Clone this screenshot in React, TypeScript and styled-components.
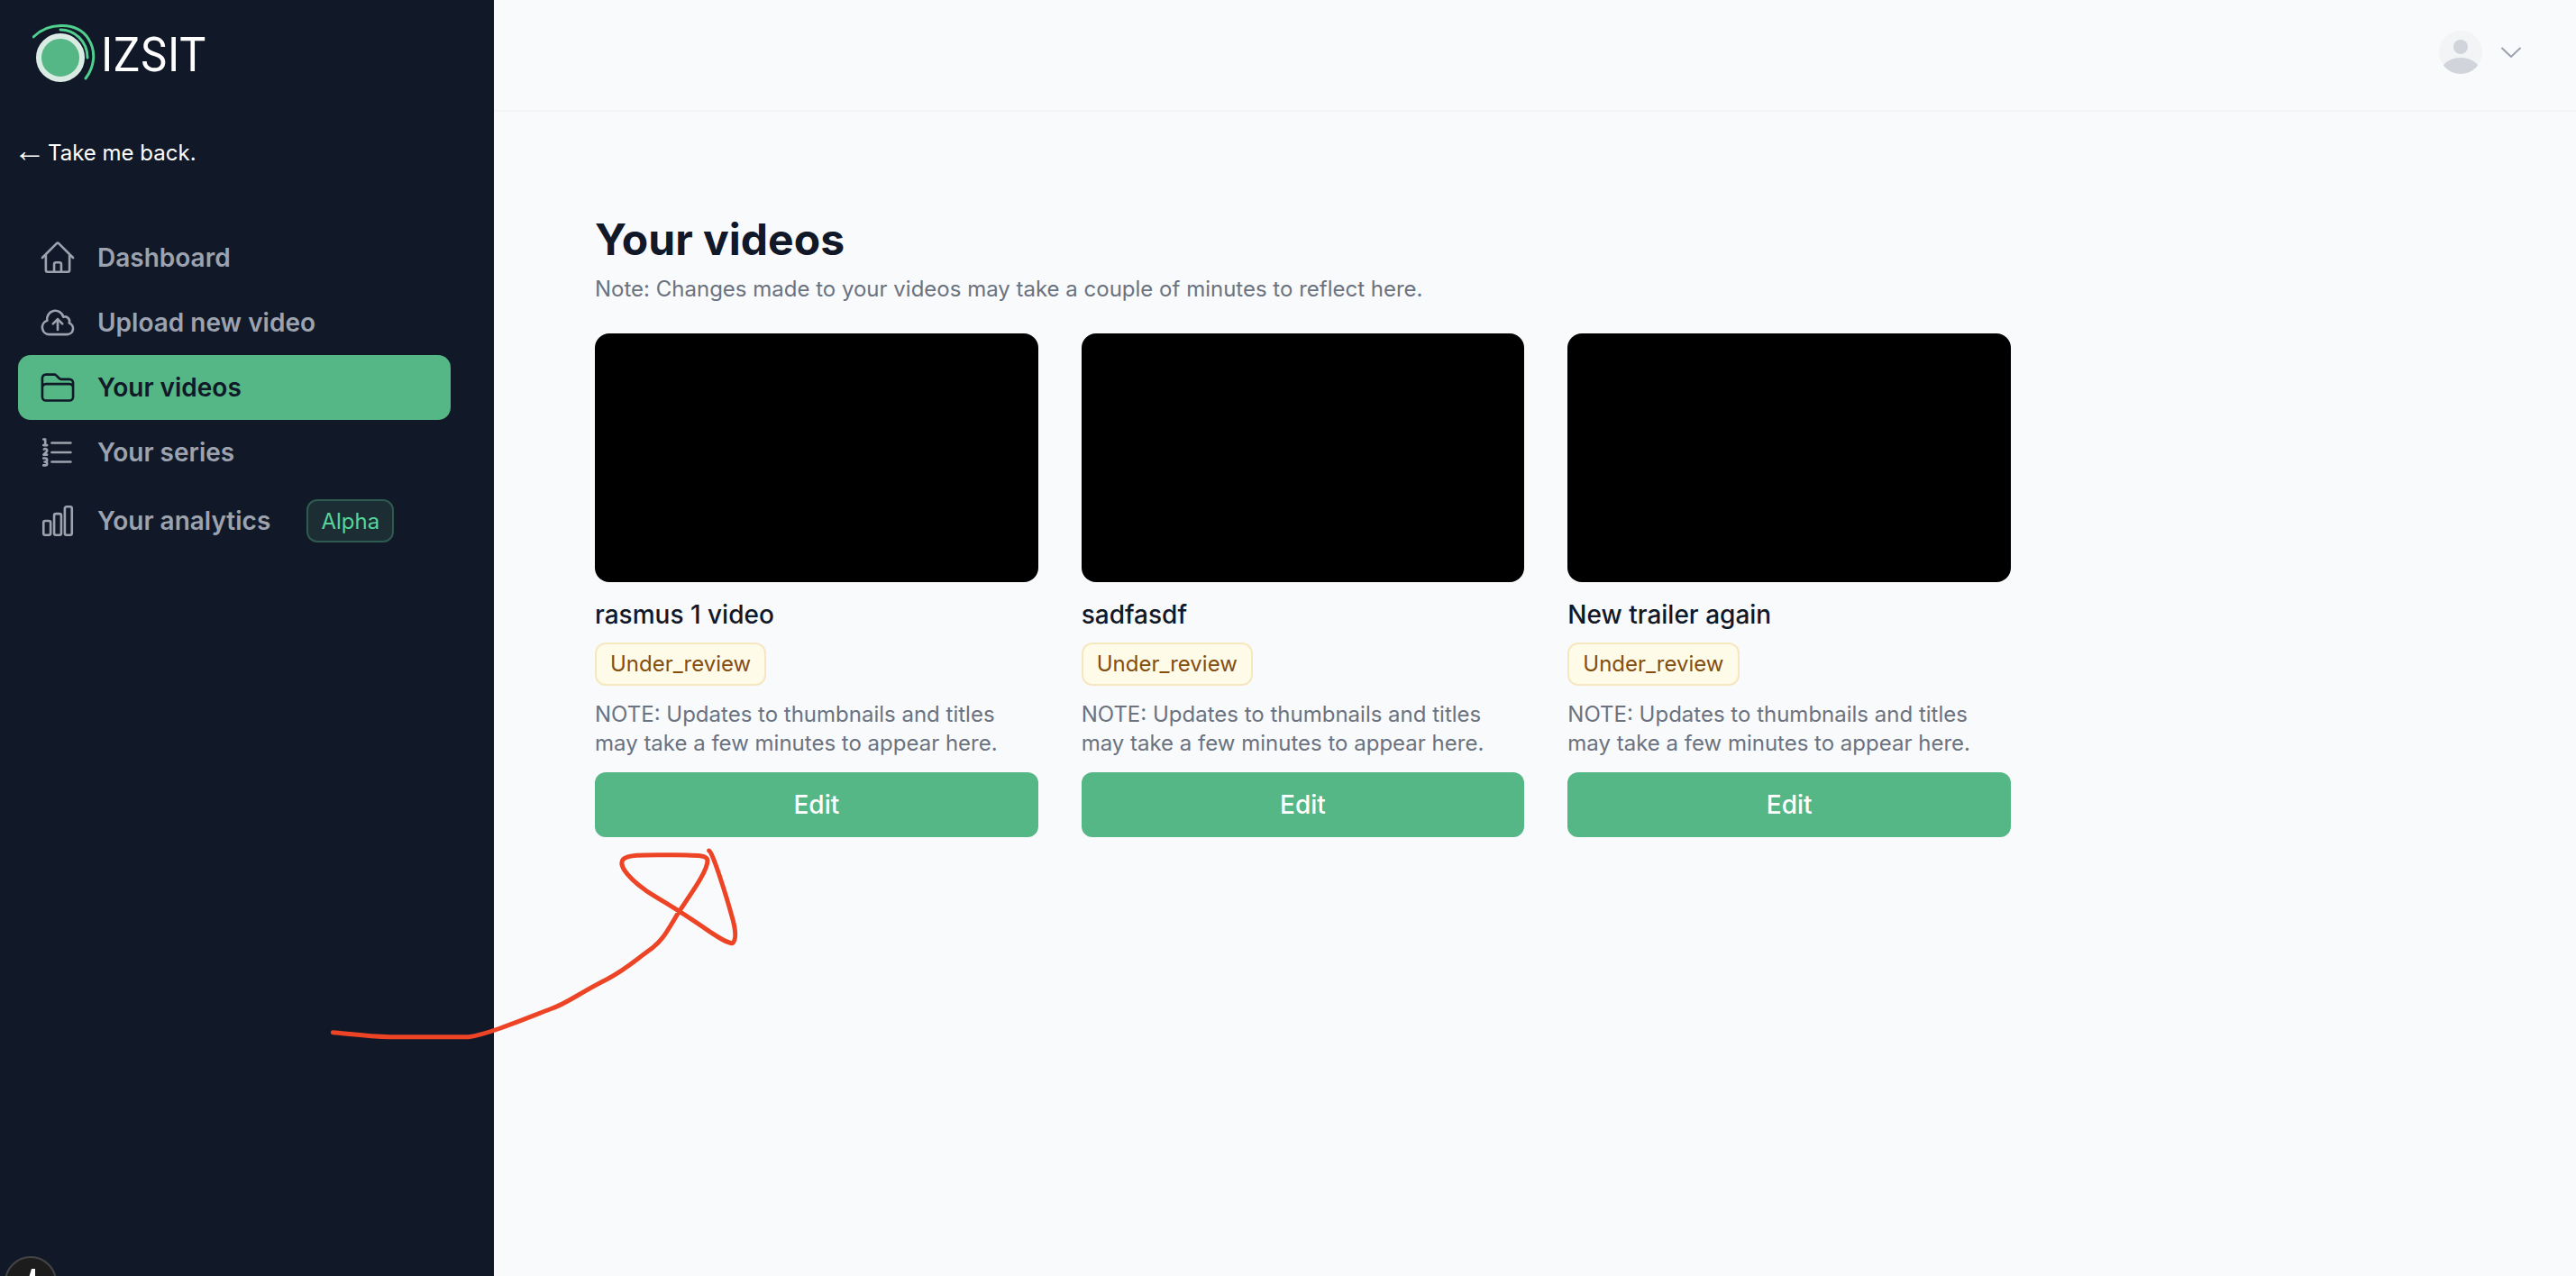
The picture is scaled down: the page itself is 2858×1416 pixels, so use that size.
import { FC, ReactNode } from "react";
import styled, { createGlobalStyle } from "styled-components";
import {
  HiOutlineHome,
  HiOutlineCloudArrowUp,
  HiOutlineFolder,
  HiOutlineNumberedList,
  HiOutlineChartBar,
} from "react-icons/hi2";

const GlobalStyle = createGlobalStyle`
  html, body {
    margin: 0;
    padding: 0;
    height: 100%;
    overflow: hidden;
    background-color: #f9fafb;
    font-family: Inter, "Noto Sans", sans-serif;
  }
  * {
    box-sizing: border-box;
  }
`;

const Page = styled.div`
  position: relative;
  display: flex;
  width: 100%;
  height: 100vh;
  overflow: hidden;
`;

const Sidebar = styled.aside`
  display: flex;
  flex-direction: column;
  width: 548px;
  flex-shrink: 0;
  background-color: #111827;
`;

const LogoRow = styled.div`
  display: flex;
  align-items: center;
  height: 122px;
  padding-left: 36px;
  gap: 6px;
`;

const LogoText = styled.span`
  display: inline-block;
  font-family: Roboto, sans-serif;
  font-size: 54px;
  font-weight: 400;
  letter-spacing: 1px;
  line-height: 1;
  color: #ffffff;
  transform: scaleX(0.9);
  transform-origin: left center;
`;

const BackLink = styled.a`
  display: block;
  height: 36px;
  margin-top: 30px;
  padding-left: 15px;
  font-size: 24px;
  line-height: 36px;
  color: #ffffff;
`;

const BackArrow = styled.span`
  font-family: "Liberation Sans", sans-serif;
  font-size: 36px;
  line-height: 0;
  vertical-align: -1px;
  margin-right: 2px;
`;

const Nav = styled.nav`
  display: flex;
  flex-direction: column;
  width: 480px;
  margin-top: 62px;
  margin-left: 20px;
`;

const NavItem = styled.a<{ $active?: boolean; $tall?: boolean }>`
  display: flex;
  align-items: center;
  height: ${(p) => (p.$tall ? "80px" : "72px")};
  padding-left: 23px;
  gap: 23px;
  border-radius: 14px;
  font-size: 28px;
  font-weight: 600;
  color: ${(p) => (p.$active ? "#111827" : "#9ca3af")};
  background-color: ${(p) => (p.$active ? "#55b686" : "transparent")};
  svg {
    flex-shrink: 0;
    font-size: 42px;
  }
`;

const AlphaBadge = styled.span`
  display: inline-flex;
  align-items: center;
  justify-content: center;
  width: 97px;
  height: 48px;
  margin-left: 17px;
  border: 2px solid #2f5a50;
  border-radius: 12px;
  background-color: #1c2e33;
  font-size: 24px;
  font-weight: 400;
  color: #55d69c;
`;

const Main = styled.main`
  display: flex;
  flex-direction: column;
  flex-grow: 1;
`;

const TopBar = styled.header`
  display: flex;
  align-items: center;
  justify-content: flex-end;
  height: 124px;
  padding-right: 61px;
  padding-bottom: 6px;
  gap: 21px;
  border-bottom: 2px solid #f3f4f6;
`;

const Content = styled.section`
  padding: 112px 0 0 112px;
`;

const Heading = styled.h1`
  margin: 0;
  font-size: 48px;
  font-weight: 700;
  line-height: 60px;
  color: #111827;
`;

const Subtitle = styled.p`
  margin: 7px 0 0;
  font-size: 24px;
  line-height: 36px;
  color: #6b7280;
`;

const Grid = styled.div`
  display: flex;
  gap: 48px;
  margin-top: 31px;
`;

const Card = styled.article`
  display: flex;
  flex-direction: column;
  width: 491.67px;
`;

const Thumbnail = styled.div`
  height: 276px;
  border-radius: 16px;
  background-color: #000000;
`;

const CardTitle = styled.h3`
  margin: 16px 0 0;
  font-size: 28px;
  font-weight: 500;
  line-height: 40px;
  color: #111827;
`;

const StatusBadge = styled.span`
  align-self: flex-start;
  display: inline-flex;
  align-items: center;
  height: 48px;
  margin-top: 11px;
  padding: 0 15px 2px;
  border: 2px solid #f6e7c1;
  border-radius: 12px;
  background-color: #fefce8;
  font-size: 24px;
  color: #854d0e;
`;

const CardNote = styled.p`
  margin: 16px 0 0;
  font-size: 24px;
  line-height: 32px;
  color: #6b7280;
`;

const EditButton = styled.button`
  height: 72px;
  margin-top: 16px;
  border: none;
  border-radius: 12px;
  background-color: #55b686;
  font-family: inherit;
  font-size: 28px;
  font-weight: 500;
  color: #ffffff;
  cursor: pointer;
`;

const Scribble = styled.svg`
  position: absolute;
  left: 340px;
  top: 920px;
  width: 520px;
  height: 260px;
  pointer-events: none;
`;

const DevIndicator = styled.div`
  position: absolute;
  left: 5px;
  top: 1394px;
  width: 58px;
  height: 58px;
  border: 2px solid #444444;
  border-radius: 50%;
  background-color: #1c1c1c;
`;

const DevGlyph = styled.svg`
  position: absolute;
  left: 20px;
  top: 12px;
  width: 16px;
  height: 20px;
`;

const LogoMark = () => (
  <svg width="70" height="68" viewBox="0 0 70 68" fill="none">
    <circle cx="31" cy="37" r="24" fill="#55b686" stroke="#d9ebe3" strokeWidth="6" />
    <path
      d="M1 14 C 18 -3, 50 -3, 62 16 C 71 30, 69 47, 59 60"
      stroke="#4fd08f"
      strokeWidth="3"
      strokeLinecap="round"
    />
    <path
      d="M31 6 C 46 6, 61 18, 61 37"
      stroke="#4fd08f"
      strokeWidth="3"
      strokeLinecap="round"
    />
  </svg>
);

const AvatarIcon = () => (
  <svg width="48" height="48" viewBox="0 0 48 48">
    <defs>
      <clipPath id="avatar-clip">
        <circle cx="24" cy="24" r="24" />
      </clipPath>
    </defs>
    <g clipPath="url(#avatar-clip)">
      <rect width="48" height="48" fill="#f3f4f6" />
      <circle cx="24" cy="18" r="8" fill="#d1d5db" />
      <ellipse cx="24" cy="46" rx="22" ry="16" fill="#d1d5db" />
    </g>
  </svg>
);

const ChevronIcon = () => (
  <svg width="22" height="12" viewBox="0 0 22 12" fill="none">
    <path d="M0.5 1 L11 11 L21.5 1" stroke="#9ca3af" strokeWidth="2" />
  </svg>
);

const NAV_ITEMS: { label: string; icon: ReactNode; active?: boolean }[] = [
  { label: "Dashboard", icon: <HiOutlineHome /> },
  { label: "Upload new video", icon: <HiOutlineCloudArrowUp /> },
  { label: "Your videos", icon: <HiOutlineFolder />, active: true },
  { label: "Your series", icon: <HiOutlineNumberedList /> },
];

const VIDEOS = ["rasmus 1 video", "sadfasdf", "New trailer again"];

const VideoCard: FC<{ title: string }> = ({ title }) => (
  <Card>
    <Thumbnail />
    <CardTitle>{title}</CardTitle>
    <StatusBadge>Under_review</StatusBadge>
    <CardNote>
      NOTE: Updates to thumbnails and titles
      <br />
      may take a few minutes to appear here.
    </CardNote>
    <EditButton>Edit</EditButton>
  </Card>
);

export default function App() {
  return (
    <Page>
      <GlobalStyle />
      <Sidebar>
        <LogoRow>
          <LogoMark />
          <LogoText>IZSIT</LogoText>
        </LogoRow>
        <BackLink>
          <BackArrow>←</BackArrow>Take me back.
        </BackLink>
        <Nav>
          {NAV_ITEMS.map((item) => (
            <NavItem key={item.label} $active={item.active}>
              {item.icon}
              {item.label}
            </NavItem>
          ))}
          <NavItem $tall>
            <HiOutlineChartBar />
            Your analytics
            <AlphaBadge>Alpha</AlphaBadge>
          </NavItem>
        </Nav>
      </Sidebar>
      <Main>
        <TopBar>
          <AvatarIcon />
          <ChevronIcon />
        </TopBar>
        <Content>
          <Heading>Your videos</Heading>
          <Subtitle>
            Note: Changes made to your videos may take a couple of minutes to reflect here.
          </Subtitle>
          <Grid>
            {VIDEOS.map((title) => (
              <VideoCard key={title} title={title} />
            ))}
          </Grid>
        </Content>
      </Main>
      <Scribble viewBox="0 0 1560 780" fill="none">
        <path
          d="M88 677 C 130 680, 200 690, 280 692 L 540 692 C 600 685, 720 635, 810 600 C 870 580, 900 550, 1000 500 C 1060 470, 1090 440, 1150 397 C 1190 365, 1200 340, 1240 275 C 1280 215, 1335 140, 1335 105 C 1335 85, 1300 87, 1200 86 C 1130 86, 1070 84, 1055 100 C 1040 115, 1055 150, 1130 205 C 1200 250, 1240 270, 1340 340 C 1370 360, 1400 380, 1418 380 C 1430 370, 1430 345, 1420 305 C 1400 230, 1350 70, 1340 72"
          stroke="#ee4426"
          strokeWidth="15"
          strokeLinecap="round"
          strokeLinejoin="round"
        />
      </Scribble>
      <DevIndicator>
        <DevGlyph viewBox="0 0 16 20">
          <polygon points="8,0 12,0 12,20 2,20" fill="#ffffff" />
        </DevGlyph>
      </DevIndicator>
    </Page>
  );
}
